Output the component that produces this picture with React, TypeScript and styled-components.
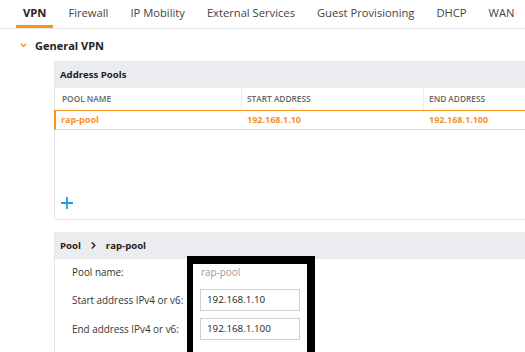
import React from 'react';
import styled, { createGlobalStyle } from 'styled-components';

const ORANGE = '#f6921e';

const GlobalStyle = createGlobalStyle`
  html, body {
    margin: 0;
    padding: 0;
    background: #fff;
    font-family: "Open Sans", "Noto Sans", sans-serif;
    color: #333;
    overflow: hidden;
  }
`;

const Page = styled.div`
  position: relative;
  width: 525px;
  height: 352px;
  overflow: hidden;
`;

const TabBar = styled.div`
  display: flex;
  gap: 8px;
  height: 28px;
  padding-left: 16px;
  border-bottom: 1px solid #e8e8e8;
`;

const Tab = styled.div<{ $active?: boolean }>`
  padding: 0 7px;
  font-size: 11.2px;
  font-weight: ${({ $active }) => ($active ? 700 : 400)};
  color: ${({ $active }) => ($active ? '#222' : '#444')};
  line-height: 25px;
  border-bottom: 3px solid ${({ $active }) => ($active ? ORANGE : 'transparent')};
  white-space: nowrap;
`;

const SectionTitle = styled.div`
  display: flex;
  align-items: center;
  height: 32px;
  padding-left: 20px;
  gap: 8px;
  font-size: 11px;
  font-weight: 700;
  color: #222;
`;

const Content = styled.div`
  padding-left: 54px;
  display: flex;
  flex-direction: column;
  gap: 12px;
`;

const Panel = styled.div`
  width: 560px;
  border-left: 1px solid #e6e6e6;
  border-bottom: 1px solid #e6e6e6;
`;

const PanelHeader = styled.div`
  height: 27px;
  background: #ebecef;
  display: flex;
  align-items: center;
  padding-left: 5px;
  gap: 10px;
  font-size: 9.6px;
  font-weight: 700;
  color: #222;
`;

const Table = styled.div`
  display: grid;
  grid-template-columns: 186px 182px 1fr;
`;

const HeadCell = styled.div<{ $sep?: boolean }>`
  height: 22px;
  line-height: 22px;
  padding-left: ${({ $sep }) => ($sep ? 5 : 7)}px;
  font-size: 8.3px;
  font-weight: 600;
  color: #666;
  border-left: ${({ $sep }) => ($sep ? '1px solid #ececec' : 'none')};
`;

const RowCell = styled.div<{ $first?: boolean }>`
  height: 18px;
  line-height: 18px;
  padding-left: ${({ $first }) => ($first ? 5 : 6)}px;
  font-size: 9px;
  font-weight: 700;
  color: ${ORANGE};
  border-top: 1px solid ${ORANGE};
  border-bottom: 1px solid #fcd3a8;
  border-left: ${({ $first }) => ($first ? `2px solid ${ORANGE}` : 'none')};
  margin-left: ${({ $first }) => ($first ? '-1px' : '0')};
`;

const TableFooter = styled.div`
  height: 89px;
  display: flex;
  align-items: flex-end;
  padding: 0 0 10px 6px;
  box-sizing: border-box;
`;

const AddButton = styled.svg`
  display: block;
`;

const Crumb = styled.svg`
  display: block;
`;

const Form = styled.div`
  display: grid;
  grid-template-columns: 128px 100px;
  grid-template-rows: 26px 30px 28px;
  align-items: center;
  padding-left: 17px;
  height: 100px;
`;

const Label = styled.div`
  font-size: 9.9px;
  color: #333;
`;

const StaticValue = styled.div`
  font-size: 9.9px;
  color: #999;
  padding-left: 1px;
`;

const Input = styled.div`
  height: 22px;
  box-sizing: border-box;
  border: 1px solid #d0d0d0;
  padding-left: 6px;
  line-height: 20px;
  font-size: 9.8px;
  color: #222;
`;

const Highlight = styled.div`
  position: absolute;
  left: 187px;
  top: 256px;
  width: 128px;
  height: 110px;
  box-sizing: border-box;
  border: 8px solid #000;
  border-left-width: 6px;
`;

const tabs = ['VPN', 'Firewall', 'IP Mobility', 'External Services', 'Guest Provisioning', 'DHCP', 'WAN'];

export default function App() {
  return (
    <Page>
      <GlobalStyle />
      <TabBar>
        {tabs.map((t, i) => (
          <Tab key={t} $active={i === 0}>{t}</Tab>
        ))}
      </TabBar>
      <SectionTitle>
        <svg width="7" height="5" viewBox="0 0 7 5">
          <path d="M0.8 0.8 L3.5 3.6 L6.2 0.8" fill="none" stroke={ORANGE} strokeWidth="1.4" />
        </svg>
        General VPN
      </SectionTitle>
      <Content>
        <Panel>
          <PanelHeader>Address Pools</PanelHeader>
          <Table>
            <HeadCell>POOL NAME</HeadCell>
            <HeadCell $sep>START ADDRESS</HeadCell>
            <HeadCell $sep>END ADDRESS</HeadCell>
            <RowCell $first>rap-pool</RowCell>
            <RowCell>192.168.1.10</RowCell>
            <RowCell>192.168.1.100</RowCell>
          </Table>
          <TableFooter>
            <AddButton width="12" height="12" viewBox="0 0 12 12">
              <path d="M6 0 V12 M0 6 H12" stroke="#1e9fe3" strokeWidth="1.8" />
            </AddButton>
          </TableFooter>
        </Panel>
        <Panel>
          <PanelHeader>
            <span>Pool</span>
            <Crumb width="5" height="7" viewBox="0 0 5 7">
              <path d="M0.8 0.6 L3.8 3.5 L0.8 6.4" fill="none" stroke="#222" strokeWidth="1.4" />
            </Crumb>
            <span>rap-pool</span>
          </PanelHeader>
          <Form>
            <Label>Pool name:</Label>
            <StaticValue>rap-pool</StaticValue>
            <Label>Start address IPv4 or v6:</Label>
            <Input>192.168.1.10</Input>
            <Label>End address IPv4 or v6:</Label>
            <Input>192.168.1.100</Input>
          </Form>
        </Panel>
      </Content>
      <Highlight />
    </Page>
  );
}
